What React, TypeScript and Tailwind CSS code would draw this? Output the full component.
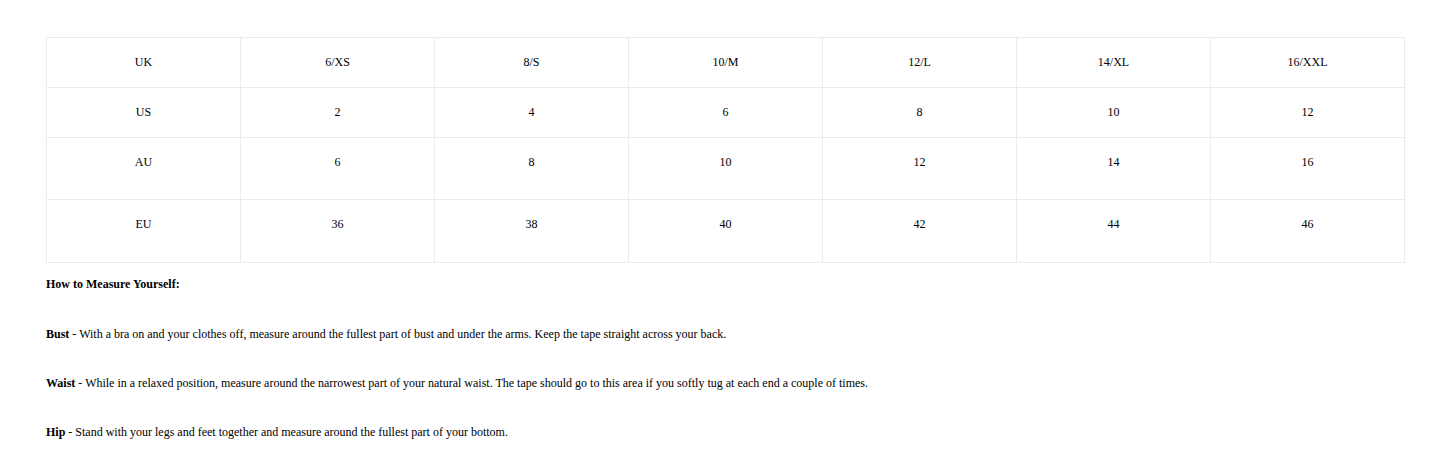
const rows = [
  { label: 'UK', values: ['6/XS', '8/S', '10/M', '12/L', '14/XL', '16/XXL'], h: 'h-[50px]' },
  { label: 'US', values: ['2', '4', '6', '8', '10', '12'], h: 'h-[50px]' },
  { label: 'AU', values: ['6', '8', '10', '12', '14', '16'], h: 'h-[62px]' },
  { label: 'EU', values: ['36', '38', '40', '42', '44', '46'], h: 'h-[63px]' },
]

const tips = [
  { name: 'Bust', text: 'With a bra on and your clothes off, measure around the fullest part of bust and under the arms. Keep the tape straight across your back.' },
  { name: 'Waist', text: 'While in a relaxed position, measure around the narrowest part of your natural waist. The tape should go to this area if you softly tug at each end a couple of times.' },
  { name: 'Hip', text: 'Stand with your legs and feet together and measure around the fullest part of your bottom.' },
]

export default function App() {
  return (
    <div className="min-h-[462px] bg-white pt-[37px] pl-[46px] text-[12px] leading-[14px] text-black" style={{ fontFamily: '"Liberation Serif", "Times New Roman", serif' }}>
      <table className="w-[1359px] table-fixed border-collapse">
        <tbody>
          {rows.map(row => (
            <tr key={row.label} className={row.h}>
              {[row.label, ...row.values].map((v, i) => (
                <td key={i} className="border border-[#ebebeb] pt-[17px] text-center align-top">
                  {v}
                </td>
              ))}
            </tr>
          ))}
        </tbody>
      </table>

      <p className="mt-[14px] font-bold">How to Measure Yourself:</p>

      <div className="mt-[36px] flex flex-col gap-[35px]">
        {tips.map(tip => (
          <p key={tip.name}>
            <strong>{tip.name}</strong> - {tip.text}
          </p>
        ))}
      </div>
    </div>
  )
}
